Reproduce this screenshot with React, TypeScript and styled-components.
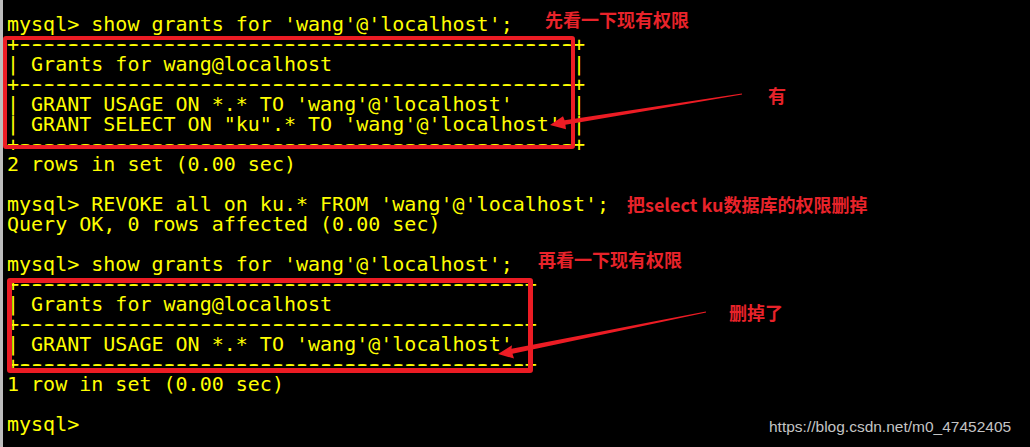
import React from "react";
import styled, { createGlobalStyle } from "styled-components";

const GlobalStyle = createGlobalStyle`
  html, body { margin: 0; padding: 0; background: #000; }
  #root { width: 1030px; height: 447px; }
`;

const Screen = styled.div`
  position: relative;
  width: 1030px;
  height: 447px;
  box-sizing: border-box;
  padding: 14px 0 0 7px;
  background: #000;
  box-shadow: inset 3px 0 0 #bdbdbd;
  overflow: hidden;
`;

const Console = styled.div`
  display: flex;
  flex-direction: column;
  font-family: "DejaVu Sans Mono", "Liberation Mono", monospace;
  font-size: 20px;
  line-height: 20px;
  color: #ffff00;
  white-space: pre;
`;

const Line = styled.div`
  height: 20px;
`;

const Dashes = styled.span`
  text-shadow: -1.5px 0 #ffff00, 1.5px 0 #ffff00;
`;

const RedBox = styled.div<{ $l: number; $t: number; $w: number; $h: number; $b: number }>`
  position: absolute;
  left: ${(p) => p.$l}px;
  top: ${(p) => p.$t}px;
  width: ${(p) => p.$w}px;
  height: ${(p) => p.$h}px;
  box-sizing: border-box;
  border: ${(p) => p.$b}px solid #ec1c24;
  border-radius: 3px;
  pointer-events: none;
`;

const Note = styled.span<{ $l: number; $t: number }>`
  position: absolute;
  left: ${(p) => p.$l}px;
  top: ${(p) => p.$t}px;
  font-family: "Noto Sans CJK SC", "Noto Sans", sans-serif;
  font-weight: 700;
  font-size: 18px;
  line-height: 18px;
  color: #e8232a;
  white-space: nowrap;
`;

const Overlay = styled.svg`
  position: absolute;
  left: 0;
  top: 0;
  pointer-events: none;
`;

const Watermark = styled.span`
  position: absolute;
  left: 769px;
  top: 419px;
  font-family: "Liberation Sans", Arial, sans-serif;
  font-size: 15.5px;
  line-height: 16px;
  color: #c4c4c4;
  white-space: nowrap;
`;

type Entry = { kind: "text"; text: string } | { kind: "rule"; n: number };

const t = (text: string): Entry => ({ kind: "text", text });
const rule = (n: number): Entry => ({ kind: "rule", n });
const row = (s: string, inner: number): Entry => t("| " + s.padEnd(inner, " ") + " |");

const lines: Entry[] = [
  t("mysql> show grants for 'wang'@'localhost';"),
  rule(46),
  row("Grants for wang@localhost", 44),
  rule(46),
  row("GRANT USAGE ON *.* TO 'wang'@'localhost'", 44),
  row("GRANT SELECT ON \"ku\".* TO 'wang'@'localhost'", 44),
  rule(46),
  t("2 rows in set (0.00 sec)"),
  t(""),
  t("mysql> REVOKE all on ku.* FROM 'wang'@'localhost';"),
  t("Query OK, 0 rows affected (0.00 sec)"),
  t(""),
  t("mysql> show grants for 'wang'@'localhost';"),
  rule(42),
  row("Grants for wang@localhost", 40),
  rule(42),
  row("GRANT USAGE ON *.* TO 'wang'@'localhost'", 40),
  rule(42),
  t("1 row in set (0.00 sec)"),
  t(""),
  t("mysql> "),
];

const notes = [
  { l: 545, t: 10, text: "先看一下现有权限" },
  { l: 768, t: 86, text: "有" },
  { l: 627, t: 195, text: "把select ku数据库的权限删掉" },
  { l: 538, t: 250, text: "再看一下现有权限" },
  { l: 729, t: 303, text: "删掉了" },
];

function Rule({ n }: { n: number }) {
  return (
    <Line>
      +<Dashes>{"-".repeat(n)}</Dashes>+
    </Line>
  );
}

export default function App() {
  return (
    <>
      <GlobalStyle />
      <Screen>
        <Console>
          {lines.map((e, i) =>
            e.kind === "rule" ? <Rule key={i} n={e.n} /> : <Line key={i}>{e.text}</Line>
          )}
        </Console>
        <RedBox $l={3} $t={36} $w={572} $h={113} $b={4} />
        <RedBox $l={7} $t={278} $w={526} $h={95} $b={5} />
        <Overlay width={1030} height={447} viewBox="0 0 1030 447">
          <polygon
            fill="#ec1c24"
            points="742.1,94.5 565.4,124.7 566,129.3 550,125 563,116.3 564.6,120.3 741.9,93.5"
          />
          <polygon
            fill="#ec1c24"
            points="706.1,312.5 512.5,353.7 514,358.5 498,354 512,345.3 511.5,348.8 705.9,311.5"
          />
        </Overlay>
        {notes.map((n, i) => (
          <Note key={i} $l={n.l} $t={n.t}>
            {n.text}
          </Note>
        ))}
        <Watermark>https://blog.csdn.net/m0_47452405</Watermark>
      </Screen>
    </>
  );
}
